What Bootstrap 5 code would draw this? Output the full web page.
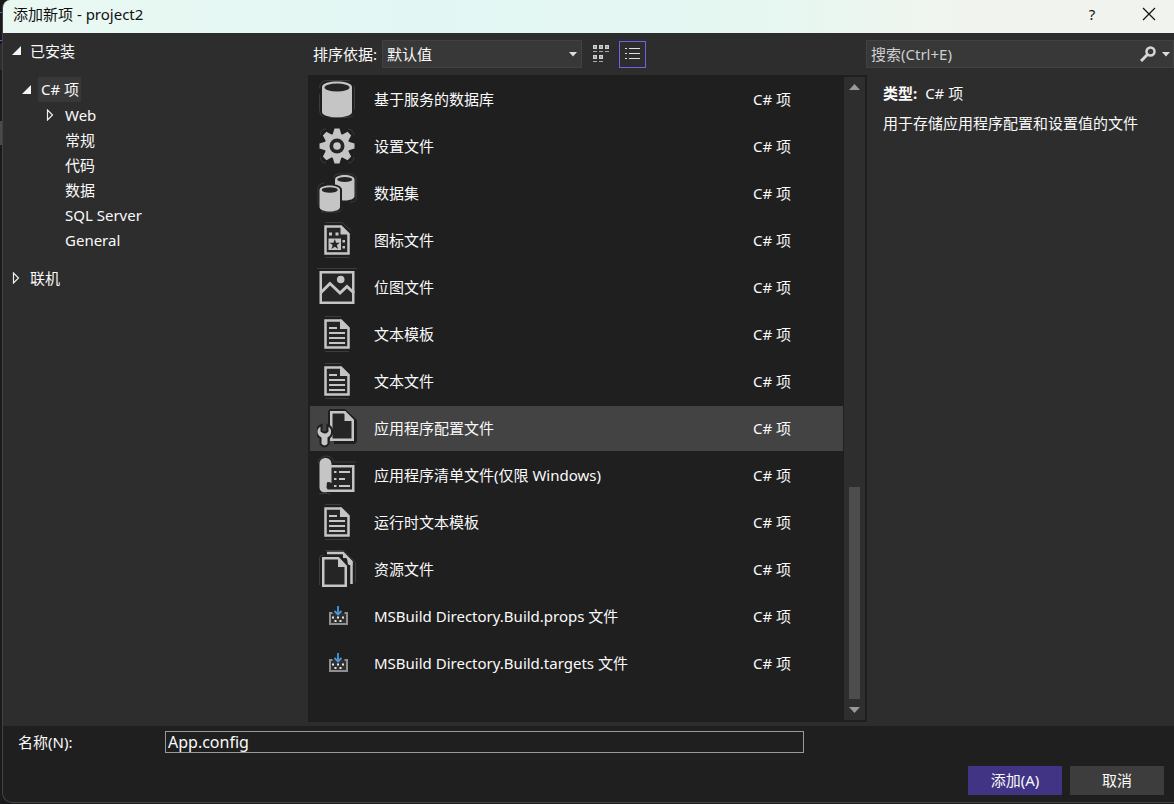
<!DOCTYPE html>
<html lang="zh-CN">
<head>
<meta charset="utf-8">
<meta name="viewport" content="width=device-width, initial-scale=1">
<title>添加新项 - project2</title>
<link href="https://cdn.jsdelivr.net/npm/bootstrap@5.3.0/dist/css/bootstrap.min.css" rel="stylesheet">
<script src="https://cdn.jsdelivr.net/npm/bootstrap@5.3.0/dist/js/bootstrap.bundle.min.js"></script>
<style>
  body { font-family: "Noto Sans", "Noto Sans CJK SC", sans-serif; font-size: 15px; line-height: 20px; color: #fafafa; background: #1a1a1c; }
  button, input, select { font: inherit; color: inherit; }
  svg { display: block; flex: none; }
  .dialog { min-height: 100vh; padding: 0 0 1px 2px; background: linear-gradient(#6a5acd, #6a5acd) 0 12px / 2px 1px no-repeat, linear-gradient(#6a5acd, #6a5acd) 0 40px / 2px 1px no-repeat, linear-gradient(#2d2d30, #2d2d30) 0 44px / 2px 26px no-repeat, linear-gradient(#4a4a4a, #4a4a4a) 0 121px / 2px 24px no-repeat; }
  .frame { background: #1f1f1f; border: 1px solid #424242; border-width: 0 0 1px 1px; border-radius: 8px 0 0 10px; overflow: hidden; }
  .titlebar { height: 33px; padding: 0 11px 5px 10px; color: #111; background: linear-gradient(90deg, #eaf8f2, #e2f7f4 35%, #e6f7f1 65%, #f1f4ee 82%); }
  .titlebar button { width: 28px; height: 28px; border: 0; padding: 0; background: none; }
  .titlebar .caps { gap: 29px; }
  .content-grid { display: grid; grid-template-columns: 305px minmax(0, 1fr) 307px; background: #2d2d2d; padding-bottom: 4px; }
  .tree ul { list-style: none; margin: 0; padding: 0; }
  .tree { padding: 5px 0 0 8px; }
  .tree button { display: flex; align-items: center; border: 0; padding: 0; background: none; height: 25px; text-align: left; }
  .tree svg { width: 12px; height: 12px; }
  .tree .root { gap: 7px; }
  .tree .level1 { padding: 14px 0 13px 10px; }
  .tree .level1 > li > button { gap: 5px; }
  .tree .level1 .picked { background: #383838; padding: 0 2px 0 3px; height: 25px; line-height: 25px; }
  .tree .level2 { padding-left: 24px; }
  .tree .level2 button { gap: 8px; }
  .tree .level2 .leaf { padding-left: 20px; }
  .sortbar { height: 42px; padding: 0 0 0 5px; gap: 5px; }
  .sortbar .form-select { width: 200px; height: 28px; padding: 0 24px 0 4px; border: 1px solid #424242; border-radius: 0; color: #fafafa; background: #383838 url("data:image/svg+xml,%3Csvg xmlns='http://www.w3.org/2000/svg' viewBox='0 0 8 5'%3E%3Cpath fill='%23ddd' d='M0 0h8L4 4.500z'/%3E%3C/svg%3E") no-repeat right 4px center / 8px 5px; font-size: 15px; line-height: 20px; }
  .view-btn { width: 27px; height: 27px; padding: 0; border: 1px solid transparent; border-radius: 0; background: none; display: flex; align-items: center; justify-content: center; }
  .view-btn.chosen { border-color: #7160e8; }
  .views { gap: 5px; }
  .listbox { background: #1f1f1f; padding: 2px; gap: 1px; }
  .items { gap: 2px; }
  .item-row { display: flex; align-items: center; width: 100%; height: 45px; border: 0; padding: 0 0 2px 7px; text-align: left; background: none; gap: 17px; }
  .item-row svg { width: 40px; height: 40px; }
  .item-row.chosen { background: #434343; }
  .item-row .kind { width: 90px; }
  .scroller { width: 21px; background: #2e2e2e; padding: 7px 0; }
  .scroller .groove { width: 11px; margin: 8px 0; }
  .scroller .thumb { height: 212px; background: #4d4d4d; }
  .searchbox { height: 28px; margin: 7px 0 7px -1px; border: 1px solid #424242; background: #383838; padding: 0 3px 0 4px; gap: 6px; }
  .searchbox input { border: 0; padding: 0; background: none; outline: 0; min-width: 0; }
  .searchbox input::placeholder { color: #cfcfcf; opacity: 1; }
  .searchbox button { border: 0; padding: 0; background: none; }
  .detail { padding: 8px 16px; line-height: 20px; }
  .detail p { margin: 0 0 10px; }
  .footer { padding: 5px 10px 7px 15px; }
  .footer label { width: 147px; }
  .name-input { width: 639px; height: 22px; padding: 0 2px; border: 1px solid #999; background: #1f1f1f; font-size: 16px; }
  .actions { gap: 8px; margin-top: 13px; }
  .actions .btn { width: 94px; height: 29px; padding: 0; border: 0; border-radius: 0; color: #fafafa; font-size: 15px; background: #3d3d3d; }
  .actions .btn.main { background: #413484; }
  .g { fill: #c5c5c5; } .s { fill: #252525; stroke: #c5c5c5; stroke-width: 2.5px; } .d { fill: #252525; } .h { fill: none; stroke: #3c3c3c; }
</style>
</head>
<body>
<svg width="0" height="0" class="position-absolute" aria-hidden="true">
  <symbol id="i-db" viewBox="0 0 40 40"><rect class="h" x="2.500" y="1.500" width="35" height="37" rx="7" stroke-dasharray="24 6"/><path class="g" d="M5 8C5 .7 35 .7 35 8v25c0 7-30 7-30 0z"/><ellipse class="d" cx="20" cy="8.500" rx="12.500" ry="4"/></symbol>
  <symbol id="i-gear" viewBox="0 0 40 40"><g class="h"><path d="M9 3q-5 0-6 6M31 3q5 0 6 6M3 31q1 6 6 6M37 31q-1 6-6 6"/></g><g class="g"><circle cx="20" cy="20" r="12.500"/><path d="M17.500 2.500h5l2.500 8H15zM17.500 37.500h5l2.500-8H15zM2.500 17.500v5l8 2.500V15zM37.500 17.500v5l-8 2.500V15z"/><path transform="rotate(45 20 20)" d="M17.500 2.500h5l2.500 8H15zM17.500 37.500h5l2.500-8H15zM2.500 17.500v5l8 2.500V15zM37.500 17.500v5l-8 2.500V15z"/></g><circle class="d" cx="20" cy="20" r="7.500"/><circle class="g" cx="20" cy="20" r="3.800"/></symbol>
  <symbol id="i-set" viewBox="0 0 40 40"><path class="h" d="M17 5q0-4 5-4h11q6 0 6 5v20q0 3-6 3M1 32V16q0-5 6-6M4 39h16q5 0 5-5"/><path class="g" d="M18 6.500c0-6 19.500-6 19.500 0V23c0 6-19.500 6-19.500 0z"/><ellipse class="d" cx="27.750" cy="6.500" rx="7.500" ry="2.500"/><path fill="#202020" d="M1.500 17C1.500 9 25 9 25 17v20H1.500z"/><path class="g" d="M2.500 17c0-6 20.500-6 20.500 0v17c0 6-20.500 6-20.500 0z"/><ellipse class="d" cx="12.750" cy="17" rx="8" ry="2.700"/></symbol>
  <symbol id="i-icon" viewBox="0 0 40 40"><path class="h" d="M8 2.500h17l9 8M8 37.500h24"/><path class="s" d="M8.500 6.500h15.500l7.500 7.500v19.500h-23z"/><path class="g" d="M23.500 5v9.500h9.500zM12 12.500h3v3h-3zM18.500 12.500h3v3h-3zM11.500 18.500H24V30H11.500zM25.500 20H28v2.500h-2.500zM25.500 26H28v2.500h-2.500z"/><path class="d" d="M17.750 19l1.300 3.700h4l-3.200 2.400 1.200 3.900-3.300-2.300-3.300 2.300 1.200-3.900-3.200-2.400h4z"/></symbol>
  <symbol id="i-image" viewBox="0 0 40 40"><path class="h" d="M0 1.500h40"/><path class="s" d="M3.750 5.250h32.500v30.500h-32.500z"/><path fill="none" stroke="#c5c5c5" stroke-width="3" d="M4 25.500l9-9L23 26l7-6.500 7 6.500"/><circle class="g" cx="23.700" cy="12.500" r="3.800"/></symbol>
  <symbol id="i-text" viewBox="0 0 40 40"><path class="h" d="M8 2.500h16M8 37.500h24"/><path class="s" d="M8.500 6.500h15.500l7.500 7.500v19.500h-23z"/><path class="g" d="M23 5v10h10zM12 13h8v2h-8zM12 18h16v2H12zM12 23h16v2H12zM12 28h16v2H12z"/></symbol>
  <symbol id="i-config" viewBox="0 0 40 40"><path fill="#1f1f1f" d="M14 1h14l12 11v20q0 4-4 4H17v-4h-6V5q0-4 3-4z"/><path class="s" d="M14.250 4.250h13.500l8 8v19.500H14.250z"/><path class="g" d="M27.500 3v10H37z"/><path fill="#c5c5c5" stroke="#1f1f1f" stroke-width="2" d="M4.500 17v6q3.500 3 6 0v-6c7 3 5 11 1 13v6q-4 5-8 0v-6c-5-3-6-10 1-13z"/></symbol>
  <symbol id="i-manifest" viewBox="0 0 40 40"><path class="h" d="M1 8q1-6 8-7 6 0 8 6h22M2 39q6-1 12 0"/><path class="s" d="M10 11.250h26.250v24.500H8z"/><path class="g" d="M2.500 9c0-8 12-8 12 0v19c-5-3-9 2-4 6v3C5 38 2.500 36 2.500 32zM17 16h2.500v2H17zM17 23h2.500v2H17zM17 30h2.500v2H17zM22 16h11v2H22zM22 23h6v2h-6zM22 30h11v2H22z"/></symbol>
  <symbol id="i-resource" viewBox="0 0 40 40"><path class="h" d="M2.500 36V9q0-3 4-3M8 1.500h18l12.500 12v20"/><path fill="none" stroke="#c5c5c5" stroke-width="2.500" d="M10 4h16l8.500 9v22"/><path class="g" d="M26 3v6h4l1 7h4.500v-4L26 3z"/><path fill="#202020" d="M4 7h18l10 9v23H4z"/><path class="s" d="M6.250 9.250h15l7.500 8v19.500H6.250z"/><path class="g" d="M21 8v10h9z"/></symbol>
  <symbol id="i-build" viewBox="0 0 40 40"><path fill="#303030" d="M13 17h17v11H13z"/><path fill="none" stroke="#8f8f8f" stroke-width="2" d="M15.500 17H13v11h17V17h-2.500"/><path fill="none" stroke="#4a96dc" stroke-width="1.800" d="M21 10v8M17.500 15l3.500 3.500 3.500-3.500"/><path fill="#e8e8e8" d="M15 20.500h2v2h-2zM20 20.500h2v2h-2zM25 20.500h2v2h-2zM17.500 24h2v2h-2zM22.500 24h2v2h-2z"/></symbol>
</svg>
<div class="dialog d-flex">
<div class="frame d-flex flex-column flex-grow-1">
  <header class="titlebar d-flex align-items-center justify-content-between">
    <span>添加新项 - project2</span>
    <div class="caps d-flex">
      <button type="button" aria-label="帮助">?</button>
      <button type="button" aria-label="关闭" class="d-flex align-items-center justify-content-center"><svg width="14" height="14" viewBox="0 0 14 14"><path d="M1 1l12 12M13 1L1 13" stroke="#111" stroke-width="1.200"/></svg></button>
    </div>
  </header>
  <main class="content-grid flex-grow-1">
    <nav class="tree">
      <ul>
        <li><button type="button" class="root"><svg viewBox="0 0 12 12"><path fill="#f5f5f5" d="M10 1v9H1z"/></svg><span>已安装</span></button>
          <ul class="level1"><li><button type="button"><svg viewBox="0 0 12 12"><path fill="#f5f5f5" d="M10 1v9H1z"/></svg><span class="picked">C# 项</span></button>
            <ul class="level2">
              <li><button type="button"><svg viewBox="0 0 12 12"><path fill="none" stroke="#eee" stroke-width="1.200" d="M2.500 1v10l5-5z"/></svg><span>Web</span></button></li>
              <li><button type="button" class="leaf">常规</button></li>
              <li><button type="button" class="leaf">代码</button></li>
              <li><button type="button" class="leaf">数据</button></li>
              <li><button type="button" class="leaf">SQL Server</button></li>
              <li><button type="button" class="leaf">General</button></li>
            </ul></li></ul>
        </li>
        <li><button type="button" class="root"><svg viewBox="0 0 12 12"><path fill="none" stroke="#eee" stroke-width="1.200" d="M2.500 1v10l5-5z"/></svg><span>联机</span></button></li>
      </ul>
    </nav>
    <section class="d-flex flex-column">
      <div class="sortbar d-flex align-items-center">
        <label for="sort">排序依据:</label>
        <select id="sort" class="form-select"><option>默认值</option></select>
        <div class="views d-flex">
          <button type="button" class="view-btn" aria-label="中等图标"><svg width="18" height="20" viewBox="0 0 18 20"><g fill="none" stroke="#d0d0d0" stroke-width="1.500"><path d="M1.750 1.750h2.500v2.500h-2.500zM7.750 1.750h2.500v2.500h-2.500zM13.750 1.750h2.500v2.500h-2.500zM1.750 11.750h2.500v2.500h-2.500zM7.750 11.750h2.500v2.500h-2.500z"/><path stroke="#aaa" stroke-width="1" d="M1 7.500h4M7 7.500h4M13 7.500h4M1 17.500h4M7 17.500h4"/></g></svg></button>
          <button type="button" class="view-btn chosen" aria-label="小图标"><svg width="15" height="14" viewBox="0 0 15 14"><path stroke="#e0e0e0" d="M0 1.500h2M4 1.500h11M0 6.500h2M4 6.500h11M0 11.500h2M4 11.500h11"/></svg></button>
        </div>
      </div>
      <div class="listbox d-flex flex-grow-1">
        <div class="items d-flex flex-column flex-grow-1">
          <button type="button" class="item-row"><svg><use href="#i-db"/></svg><span class="flex-grow-1">基于服务的数据库</span><span class="kind">C# 项</span></button>
          <button type="button" class="item-row"><svg><use href="#i-gear"/></svg><span class="flex-grow-1">设置文件</span><span class="kind">C# 项</span></button>
          <button type="button" class="item-row"><svg><use href="#i-set"/></svg><span class="flex-grow-1">数据集</span><span class="kind">C# 项</span></button>
          <button type="button" class="item-row"><svg><use href="#i-icon"/></svg><span class="flex-grow-1">图标文件</span><span class="kind">C# 项</span></button>
          <button type="button" class="item-row"><svg><use href="#i-image"/></svg><span class="flex-grow-1">位图文件</span><span class="kind">C# 项</span></button>
          <button type="button" class="item-row"><svg><use href="#i-text"/></svg><span class="flex-grow-1">文本模板</span><span class="kind">C# 项</span></button>
          <button type="button" class="item-row"><svg><use href="#i-text"/></svg><span class="flex-grow-1">文本文件</span><span class="kind">C# 项</span></button>
          <button type="button" class="item-row chosen"><svg><use href="#i-config"/></svg><span class="flex-grow-1">应用程序配置文件</span><span class="kind">C# 项</span></button>
          <button type="button" class="item-row"><svg><use href="#i-manifest"/></svg><span class="flex-grow-1">应用程序清单文件(仅限 Windows)</span><span class="kind">C# 项</span></button>
          <button type="button" class="item-row"><svg><use href="#i-text"/></svg><span class="flex-grow-1">运行时文本模板</span><span class="kind">C# 项</span></button>
          <button type="button" class="item-row"><svg><use href="#i-resource"/></svg><span class="flex-grow-1">资源文件</span><span class="kind">C# 项</span></button>
          <button type="button" class="item-row"><svg><use href="#i-build"/></svg><span class="flex-grow-1">MSBuild Directory.Build.props 文件</span><span class="kind">C# 项</span></button>
          <button type="button" class="item-row"><svg><use href="#i-build"/></svg><span class="flex-grow-1">MSBuild Directory.Build.targets 文件</span><span class="kind">C# 项</span></button>
        </div>
        <div class="scroller d-flex flex-column align-items-center">
          <svg width="11" height="6" viewBox="0 0 11 6"><path fill="#999" d="M0 6h11L5.500 0z"/></svg>
          <div class="groove flex-grow-1 d-flex flex-column justify-content-end"><div class="thumb"></div></div>
          <svg width="11" height="6" viewBox="0 0 11 6"><path fill="#999" d="M0 0h11L5.500 6z"/></svg>
        </div>
      </div>
    </section>
    <aside>
      <div class="searchbox d-flex align-items-center">
        <input type="text" class="flex-grow-1" placeholder="搜索(Ctrl+E)" aria-label="搜索">
        <button type="button" aria-label="搜索"><svg width="16" height="16" viewBox="0 0 16 16"><circle cx="10.500" cy="5.500" r="4" fill="none" stroke="#d6d6d6" stroke-width="2.500"/><path d="M7.500 8.500L1 15" stroke="#d6d6d6" stroke-width="3"/></svg></button>
        <button type="button" aria-label="搜索选项"><svg width="8" height="5" viewBox="0 0 8 5"><path fill="#ddd" d="M0 0h8L4 4.500z"/></svg></button>
      </div>
      <div class="detail">
        <p><strong class="me-1">类型:</strong> <span>C# 项</span></p>
        <p>用于存储应用程序配置和设置值的文件</p>
      </div>
    </aside>
  </main>
  <footer class="footer">
    <div class="d-flex align-items-center">
      <label for="name">名称(N):</label>
      <input id="name" type="text" class="name-input" value="App.config">
    </div>
    <div class="actions d-flex justify-content-end">
      <button type="button" class="btn main">添加(A)</button>
      <button type="button" class="btn">取消</button>
    </div>
  </footer>
</div>
</div>
</body>
</html>
